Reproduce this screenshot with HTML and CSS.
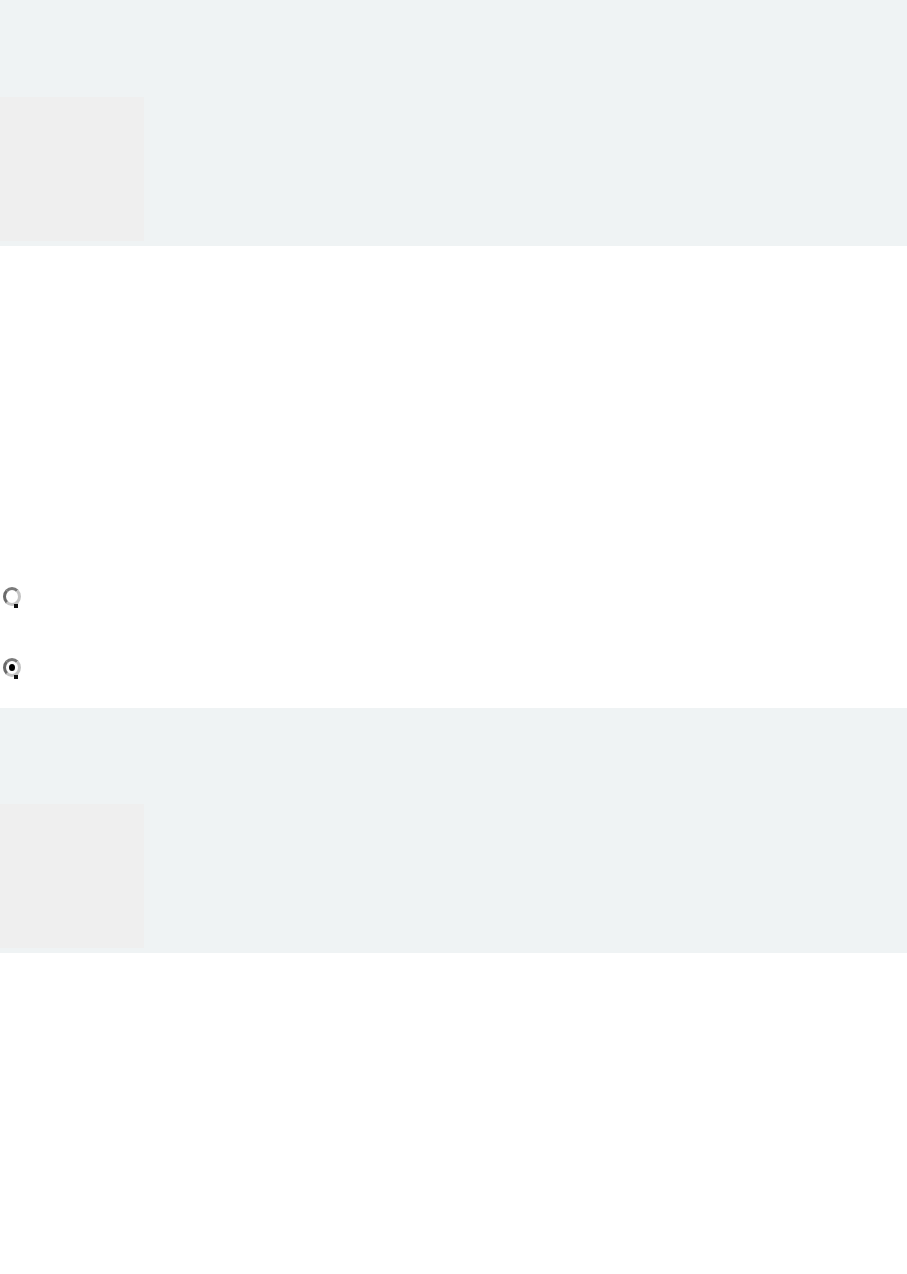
FILE: index.html
```html
<!DOCTYPE html>
<html lang="en">
<head>
<meta charset="utf-8">
<title>Page</title>
<link rel="stylesheet" href="styles.css">
</head>
<body>
  <section class="band band-top">
    <div class="tile"></div>
  </section>
  <div class="options">
    <label class="option"><input type="radio" name="opt" class="radio"></label>
    <label class="option"><input type="radio" name="opt" class="radio" checked></label>
  </div>
  <section class="band band-bottom">
    <div class="tile"></div>
  </section>
</body>
</html>
```
FILE: styles.css
```css
html, body {
  margin: 0;
  padding: 0;
  background: #ffffff;
  font-family: "Liberation Sans", Arial, sans-serif;
}

.band {
  background: #eff3f4;
  display: flex;
  flex-direction: column;
  padding-bottom: 5px;
}

.band-top {
  padding-top: 97px;
}

.band-bottom {
  padding-top: 96px;
}

.tile {
  width: 144px;
  height: 144px;
  background: #efefef;
}

.options {
  display: flex;
  flex-direction: column;
  gap: 51px;
  padding-top: 340px;
  padding-bottom: 31px;
  padding-left: 3px;
}

.option {
  display: flex;
  align-items: center;
  height: 20px;
}

.radio {
  appearance: none;
  -webkit-appearance: none;
  margin: 0;
  width: 18px;
  height: 19px;
  border-radius: 50%;
  box-sizing: border-box;
  border: 3px solid #c4c4c4;
  border-left-color: #6a6a6a;
  border-top-color: #7a7a7a;
  background: #ffffff;
  position: relative;
}

.radio::after {
  content: "";
  position: absolute;
  left: 8px;
  top: 14px;
  width: 4px;
  height: 4px;
  background: #111;
}

.radio:checked::before {
  content: "";
  position: absolute;
  left: 3px;
  top: 3px;
  width: 6px;
  height: 7px;
  border-radius: 50%;
  background: #000;
}
```
